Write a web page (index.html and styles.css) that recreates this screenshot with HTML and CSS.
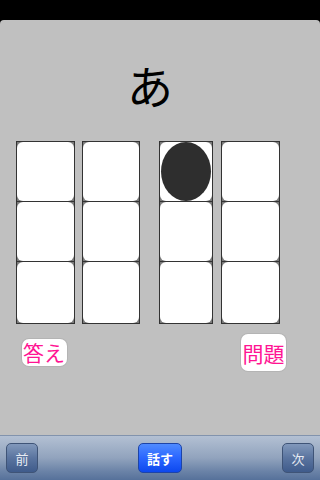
FILE: index.html
```html
<!DOCTYPE html>
<html lang="ja">
<head>
<meta charset="utf-8">
<link rel="stylesheet" href="styles.css">
</head>
<body>
<div class="status"></div>
<main class="stage">
  <div class="title">あ</div>
  <div class="grid">
    <div class="col c1">
      <div class="cell"><div class="face"></div></div>
      <div class="cell"><div class="face"></div></div>
      <div class="cell tall"><div class="face"></div></div>
    </div>
    <div class="col c2">
      <div class="cell"><div class="face"></div></div>
      <div class="cell"><div class="face"></div></div>
      <div class="cell tall"><div class="face"></div></div>
    </div>
    <div class="col c3">
      <div class="cell"><div class="face"><div class="dot"></div></div></div>
      <div class="cell"><div class="face"></div></div>
      <div class="cell tall"><div class="face"></div></div>
    </div>
    <div class="col c4">
      <div class="cell"><div class="face"></div></div>
      <div class="cell"><div class="face"></div></div>
      <div class="cell tall"><div class="face"></div></div>
    </div>
  </div>
  <div class="actions">
    <div class="pill answer">答え</div>
    <div class="pill question">問題</div>
  </div>
</main>
<nav class="toolbar">
  <div class="tbtn">前</div>
  <div class="tbtn primary">話す</div>
  <div class="tbtn">次</div>
</nav>
</body>
</html>
```

FILE: styles.css
```css
html, body {
  margin: 0;
  padding: 0;
}
body {
  width: 320px;
  height: 480px;
  background: #000;
  font-family: "Noto Sans CJK JP", "Noto Sans", sans-serif;
  display: flex;
  flex-direction: column;
  overflow: hidden;
}
.status {
  height: 20px;
  flex: none;
}
.stage {
  height: 415px;
  flex: none;
  background: #c0c0c0;
  border-radius: 4px 4px 0 0;
  display: flex;
  flex-direction: column;
}
.title {
  margin-top: 40px;
  padding-right: 20px;
  text-align: center;
  font-size: 46px;
  line-height: 48px;
  color: #000;
}
.grid {
  margin-top: 33px;
  padding-left: 16px;
  display: flex;
  align-items: flex-start;
}
.col {
  background: #333;
  padding: 1px;
  display: flex;
  flex-direction: column;
  gap: 1px;
}
.c1 { width: 57px; }
.c2 { width: 56px; margin-left: 7px; }
.c3 { width: 52px; margin-left: 19px; }
.c4 { width: 57px; margin-left: 8px; }
.cell {
  height: 59px;
  background: #7a7a7a;
  display: flex;
}
.cell.tall { height: 61px; }
.face {
  flex: 1;
  background: #fff;
  border-radius: 6px;
  display: flex;
  padding: 0 1px;
}
.dot {
  flex: 1;
  background: #2e2e2e;
  border-radius: 50%;
}
.actions {
  display: flex;
  justify-content: space-between;
  align-items: flex-start;
  padding: 0 34px 0 22px;
}
.pill {
  background: #fff;
  border-radius: 7px;
  color: #ff1493;
  font-size: 21px;
  box-shadow: 0 0 0 1px #b4b4b4;
  display: flex;
  align-items: center;
}
.answer {
  margin-top: 15px;
  width: 45px;
  height: 27px;
  line-height: 27px;
  padding-left: 1px;
  box-sizing: border-box;
}
.question {
  margin-top: 10px;
  width: 45px;
  height: 37px;
  justify-content: center;
}
.toolbar {
  height: 45px;
  flex: none;
  box-sizing: border-box;
  border-top: 1px solid #8293ad;
  background: linear-gradient(#b3c0d3, #91a3bd 50%, #6b83a7 80%, #56719a);
  display: flex;
  justify-content: space-between;
  align-items: flex-start;
  padding: 7px 6px 0;
}
.tbtn {
  width: 32px;
  height: 30px;
  box-sizing: border-box;
  border-radius: 5px;
  border: 1px solid #3f5477;
  background: linear-gradient(#8198bb, #5a749f 50%, #3f5b8b);
  color: #e8ecf4;
  font-size: 13px;
  display: flex;
  align-items: center;
  justify-content: center;
}
.tbtn.primary {
  width: 44px;
  border-color: #1d44a8;
  background: linear-gradient(#4f8bff, #2a66ff 50%, #0d48ee);
  color: #fff;
  font-weight: bold;
}
```
